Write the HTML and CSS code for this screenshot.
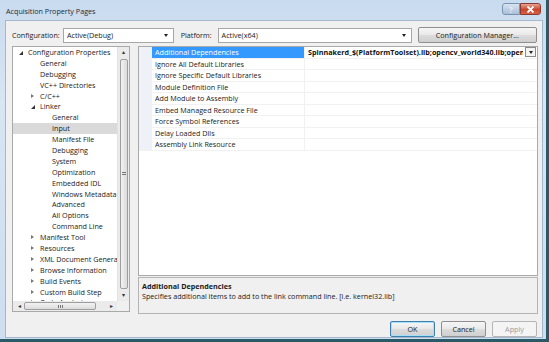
FILE: index.html
```html
<!DOCTYPE html>
<html lang="en">
<head>
    <meta charset="UTF-8">
    <title>Acquisition Property Pages</title>
    <link rel="stylesheet" href="styles.css">
</head>
<body>
    <div class="window">
        <div class="titlebar">
            <span class="title">Acquisition Property Pages</span>
            <div class="caption-btns">
                <span class="cap-help">?</span>
                <span class="cap-close">
                    <svg width="9" height="7" viewBox="0 0 9 7"><path d="M1.5 0.5 L7.5 6.5 M7.5 0.5 L1.5 6.5" stroke="#fff" stroke-width="1.8"/></svg>
                </span>
            </div>
        </div>

        <div class="client">
            <div class="toolbar">
                <span class="lbl">Configuration:</span>
                <div class="combo combo-config"><span>Active(Debug)</span><i class="combo-arrow"></i></div>
                <span class="lbl lbl-platform">Platform:</span>
                <div class="combo combo-platform"><span>Active(x64)</span><i class="combo-arrow"></i></div>
                <button class="btn btn-manager">Configuration Manager...</button>
            </div>

            <div class="main">
                <div class="tree">
                    <div class="tree-body">
                        <ul class="tree-list">
                            <li class="lvl0"><i class="tw open"></i>Configuration Properties</li>
                            <li class="lvl1">General</li>
                            <li class="lvl1">Debugging</li>
                            <li class="lvl1">VC++ Directories</li>
                            <li class="lvl1"><i class="tw closed"></i>C/C++</li>
                            <li class="lvl1"><i class="tw open"></i>Linker</li>
                            <li class="lvl2">General</li>
                            <li class="lvl2 selected">Input</li>
                            <li class="lvl2">Manifest File</li>
                            <li class="lvl2">Debugging</li>
                            <li class="lvl2">System</li>
                            <li class="lvl2">Optimization</li>
                            <li class="lvl2">Embedded IDL</li>
                            <li class="lvl2">Windows Metadata</li>
                            <li class="lvl2">Advanced</li>
                            <li class="lvl2">All Options</li>
                            <li class="lvl2">Command Line</li>
                            <li class="lvl1"><i class="tw closed"></i>Manifest Tool</li>
                            <li class="lvl1"><i class="tw closed"></i>Resources</li>
                            <li class="lvl1"><i class="tw closed"></i>XML Document Generator</li>
                            <li class="lvl1"><i class="tw closed"></i>Browse Information</li>
                            <li class="lvl1"><i class="tw closed"></i>Build Events</li>
                            <li class="lvl1"><i class="tw closed"></i>Custom Build Step</li>
                            <li class="lvl1"><i class="tw closed"></i>Code Analysis</li>
                        </ul>
                        <div class="vscroll">
                            <span class="sb-arrow">&#9652;</span>
                            <div class="vthumb"><span class="grip-v"></span></div>
                            <span class="sb-arrow">&#9662;</span>
                        </div>
                    </div>
                    <div class="hscroll-row">
                        <div class="hscroll">
                            <span class="sb-arrow">&#9666;</span>
                            <div class="htrack"><div class="hthumb"><span class="grip-h"></span></div></div>
                            <span class="sb-arrow">&#9656;</span>
                        </div>
                        <div class="sb-corner"></div>
                    </div>
                </div>

                <div class="right">
                    <div class="grid">
                        <div class="row selected">
                            <span class="gutter"></span>
                            <span class="name">Additional Dependencies</span>
                            <span class="value">Spinnakerd_$(PlatformToolset).lib;opencv_world340.lib;opencv_world340d.lib;%(AdditionalDependencies)</span>
                            <span class="drop"><i class="combo-arrow"></i></span>
                        </div>
                        <div class="row"><span class="gutter"></span><span class="name">Ignore All Default Libraries</span><span class="value"></span></div>
                        <div class="row"><span class="gutter"></span><span class="name">Ignore Specific Default Libraries</span><span class="value"></span></div>
                        <div class="row"><span class="gutter"></span><span class="name">Module Definition File</span><span class="value"></span></div>
                        <div class="row"><span class="gutter"></span><span class="name">Add Module to Assembly</span><span class="value"></span></div>
                        <div class="row"><span class="gutter"></span><span class="name">Embed Managed Resource File</span><span class="value"></span></div>
                        <div class="row"><span class="gutter"></span><span class="name">Force Symbol References</span><span class="value"></span></div>
                        <div class="row"><span class="gutter"></span><span class="name">Delay Loaded Dlls</span><span class="value"></span></div>
                        <div class="row"><span class="gutter"></span><span class="name">Assembly Link Resource</span><span class="value"></span></div>
                    </div>
                    <div class="desc">
                        <p class="desc-title">Additional Dependencies</p>
                        <p class="desc-text">Specifies additional items to add to the link command line. [i.e. kernel32.lib]</p>
                    </div>
                </div>
            </div>

            <div class="buttons">
                <button class="btn btn-ok">OK</button>
                <button class="btn">Cancel</button>
                <button class="btn btn-disabled">Apply</button>
            </div>
        </div>
    </div>
</body>
</html>
```

FILE: styles.css
```css
html, body {
    margin: 0;
    padding: 0;
}

body {
    width: 549px;
    height: 342px;
    overflow: hidden;
    font-family: 'Open Sans', 'Noto Sans', sans-serif;
    font-size: 7.2px;
    color: #1a1a1a;
    background: #d7e4f2;
}

.window {
    width: 549px;
    height: 342px;
    box-sizing: border-box;
    display: flex;
    flex-direction: column;
    padding: 0 3px 3px 5px;
    background: linear-gradient(180deg, #c9dbef 0%, #d8e5f3 30%, #cddef0 100%);
    border-right: 3px solid #2a5a68;
    border-bottom: 3px solid #2a5a68;
}

/* title bar */
.titlebar {
    height: 20px;
    flex: none;
    display: flex;
    align-items: flex-start;
    justify-content: space-between;
}

.title {
    margin-top: 6px;
    margin-left: 1px;
    font-size: 7.2px;
    color: #1e2b3a;
}

.caption-btns {
    display: flex;
    margin-top: 3px;
    margin-right: 2px;
}

.cap-help,
.cap-close {
    height: 12px;
    display: flex;
    align-items: center;
    justify-content: center;
    border: 1px solid #7c93b0;
    box-sizing: border-box;
}

.cap-help {
    width: 18px;
    font-size: 8px;
    font-weight: bold;
    color: #e8eef6;
    background: linear-gradient(180deg, #d7e3f1, #a9bfda);
    border-radius: 3px 0 0 3px;
}

.cap-close {
    width: 21px;
    background: linear-gradient(180deg, #e9a494, #c9442d 55%, #d8624a);
    border-color: #8a3a2e;
    border-radius: 0 3px 3px 0;
}

/* client area */
.client {
    flex: 1;
    display: flex;
    flex-direction: column;
    background: #f0f0f0;
    padding: 6px 5px 0 6px;
    border: 1px solid #a5b7cc;
}

.toolbar {
    display: flex;
    align-items: center;
    height: 16px;
}

.lbl {
    width: 52px;
}

.lbl-platform {
    width: auto;
    margin-left: 7px;
    margin-right: 6px;
}

.combo {
    height: 15px;
    box-sizing: border-box;
    border: 1px solid #a7a7a7;
    background: #fff;
    display: flex;
    align-items: center;
    justify-content: space-between;
    padding: 0 5px 0 3px;
}

.combo-config {
    width: 113px;
}

.combo-platform {
    width: 198px;
}

.combo-arrow {
    width: 0;
    height: 0;
    border-left: 2.5px solid transparent;
    border-right: 2.5px solid transparent;
    border-top: 3px solid #222;
}

.btn {
    font-family: inherit;
    font-size: 7.2px;
    color: #1a1a1a;
    height: 16px;
    padding: 0;
    border: 1px solid #8e8f8f;
    border-radius: 2px;
    background: linear-gradient(180deg, #f6f6f6 0%, #e9e9e9 48%, #dcdcdc 52%, #cfcfcf 100%);
}

.btn-manager {
    margin-left: 6px;
    width: 122px;
}

/* main two panes */
.main {
    display: flex;
    margin-top: 3px;
    gap: 8px;
}

.tree {
    width: 118px;
    height: 266px;
    box-sizing: border-box;
    border: 1px solid #a9a9a9;
    background: #fff;
    display: flex;
    flex-direction: column;
}

.tree-body {
    flex: 1;
    display: flex;
    overflow: hidden;
}

.tree-list {
    list-style: none;
    margin: 0;
    padding: 0;
    flex: 1;
    overflow: hidden;
}

.tree-list li {
    height: 10.9px;
    line-height: 10.9px;
    white-space: nowrap;
    overflow: hidden;
    position: relative;
}

.lvl0 { padding-left: 15px; }
.lvl1 { padding-left: 27px; }
.lvl2 { padding-left: 39px; }

.tree-list li.selected {
    background: #dadada;
}

.tw {
    position: absolute;
    top: 3px;
    width: 5px;
    height: 5px;
}

.lvl0 .tw { left: 6px; }
.lvl1 .tw { left: 18px; }

.tw.open {
    width: 0;
    height: 0;
    top: 4px;
    border-left: 4px solid transparent;
    border-bottom: 4px solid #333;
}

.tw.closed {
    width: 0;
    height: 0;
    top: 3px;
    border-top: 2.5px solid transparent;
    border-bottom: 2.5px solid transparent;
    border-left: 3.5px solid #777;
}

.vscroll {
    width: 11px;
    flex: none;
    background: #ebebeb;
    display: flex;
    flex-direction: column;
    align-items: center;
    border-left: 1px solid #e2e2e2;
}

.sb-arrow {
    font-size: 6px;
    line-height: 11px;
    height: 11px;
    color: #333;
}

.vthumb {
    flex: 1;
    width: 8px;
    margin: 1px 0;
    box-sizing: border-box;
    border: 1px solid #9e9e9e;
    border-radius: 2px;
    background: linear-gradient(90deg, #f2f2f2, #dcdcdc);
    display: flex;
    align-items: center;
    justify-content: center;
}

.grip-v {
    width: 4px;
    height: 4px;
    background: repeating-linear-gradient(180deg, #777 0 1px, transparent 1px 2px);
}

.hscroll-row {
    display: flex;
    height: 10px;
    flex: none;
}

.hscroll {
    flex: 1;
    display: flex;
    align-items: center;
    background: #ebebeb;
    padding: 0 3px;
}

.hscroll .sb-arrow {
    line-height: 10px;
    height: 10px;
    width: 6px;
    text-align: center;
}

.htrack {
    flex: 1;
    padding: 0 12px 0 2px;
}

.hthumb {
    height: 8px;
    box-sizing: border-box;
    border: 1px solid #9e9e9e;
    border-radius: 2px;
    background: linear-gradient(180deg, #f2f2f2, #dcdcdc);
    display: flex;
    align-items: center;
    justify-content: center;
}

.grip-h {
    width: 5px;
    height: 3px;
    background: repeating-linear-gradient(90deg, #777 0 1px, transparent 1px 2px);
}

.sb-corner {
    width: 12px;
    background: #f0f0f0;
}

.right {
    width: 400px;
    display: flex;
    flex-direction: column;
}

.grid {
    height: 230px;
    box-sizing: border-box;
    border: 1px solid #a9a9a9;
    background: #fff;
    overflow: hidden;
}

.row {
    display: flex;
    height: 11.5px;
    line-height: 11.5px;
    border-bottom: 1px solid #f1f1f1;
    box-sizing: border-box;
    white-space: nowrap;
}

.gutter {
    width: 13px;
    flex: none;
    background: #eef2f8;
}

.name {
    width: 153px;
    flex: none;
    padding-left: 3px;
    box-sizing: border-box;
    border-right: 1px solid #f1f1f1;
}

.value {
    flex: 1;
    overflow: hidden;
    padding-left: 3px;
    font-weight: bold;
    color: #111;
}

.row.selected .name {
    background: #3399ff;
    color: #fff;
}

.drop {
    width: 11px;
    height: 10px;
    margin: 0 1px 0 2px;
    box-sizing: border-box;
    border: 1px solid #8a8a8a;
    background: #f4f4f4;
    display: flex;
    align-items: center;
    justify-content: center;
}

.desc {
    height: 37px;
    margin-top: 1px;
    box-sizing: border-box;
    border: 1px solid #b4b4b4;
    padding: 3px 3px;
}

.desc p {
    margin: 0;
    line-height: 10px;
}

.desc-title {
    font-weight: bold;
}

.desc-text {
    margin-top: 1px;
}

.buttons {
    display: flex;
    justify-content: flex-end;
    gap: 6px;
    margin-top: 7px;
}

.buttons .btn {
    width: 45px;
}

.btn-ok {
    border-color: #3c7fb1;
    box-shadow: inset 0 0 0 1px #a6dff7;
}

.btn-disabled {
    color: #9b9b9b;
    border-color: #b5b5b5;
    background: #f4f4f4;
}
```
